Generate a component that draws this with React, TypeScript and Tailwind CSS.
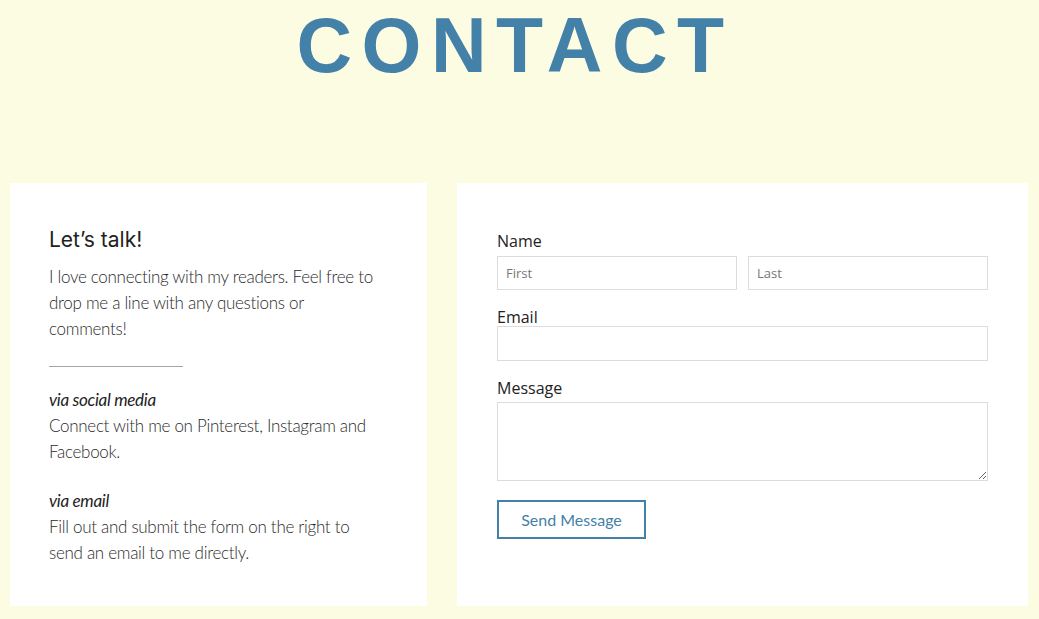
export default function App() {
  const body = "font-['Lato',sans-serif] font-light text-[17px] leading-[26px] tracking-[-0.3px] text-[#2b2b2b]";
  const label = "block h-5 font-['Open_Sans',sans-serif] text-[16px] leading-5 text-[#222]";
  const field =
    "block w-full border border-[#dcdcdc] bg-white px-2 font-['Open_Sans',sans-serif] text-[13px] text-[#555] placeholder:text-[#777] outline-none";

  return (
    <div className="min-h-[619px] w-full bg-[#fcfce3] pb-10">
      <h1 className="pt-[7px] pr-[9px] text-center font-['Liberation_Sans',Arial,sans-serif] text-[77px] font-bold leading-[77px] tracking-[9.5px] text-[#4381a8]">
        CONTACT
      </h1>

      <div className="mt-[99px] grid grid-cols-[417px_1fr] gap-[30px] pl-[10px] pr-[11px]">
        <section className="h-[423px] bg-white pl-[39px] pr-[48px] pt-[42px]">
          <h2 className="font-['Inter',sans-serif] text-[21px] leading-[30px] text-[#222]">Let’s talk!</h2>
          <p className={`mt-[9px] ${body}`}>
            I love connecting with my readers. Feel free to drop me a line with any questions or comments!
          </p>
          <div className="mt-[24px] h-px w-[134px] bg-[#a5a5a5]" />

          <h3 className={`mt-[20px] ${body} font-normal italic text-[#222]`}>via social media</h3>
          <p className={body}>Connect with me on Pinterest, Instagram and Facebook.</p>

          <h3 className={`mt-[23px] ${body} font-normal italic text-[#222]`}>via email</h3>
          <p className={body}>Fill out and submit the form on the right to send an email to me directly.</p>
        </section>

        <section className="h-[423px] bg-white px-[40px] pt-[48px]">
          <form onSubmit={(e) => e.preventDefault()}>
            <label className={label}>Name</label>
            <div className="mt-[5px] grid grid-cols-2 gap-[11px]">
              <input className={`${field} h-[34px]`} placeholder="First" />
              <input className={`${field} h-[34px]`} placeholder="Last" />
            </div>

            <label className={`mt-[17px] ${label}`}>Email</label>
            <input className={`-mt-px ${field} h-[35px]`} type="email" />

            <label className={`mt-[17px] ${label}`}>Message</label>
            <textarea className={`mt-[4px] ${field} h-[79px] resize-y`} />

            <button
              type="submit"
              className="mt-[19px] h-[39px] w-[149px] border-2 border-[#4381a8] bg-white font-['Lato',sans-serif] text-[16px] text-[#4381a8]"
            >
              Send Message
            </button>
          </form>
        </section>
      </div>
    </div>
  );
}
